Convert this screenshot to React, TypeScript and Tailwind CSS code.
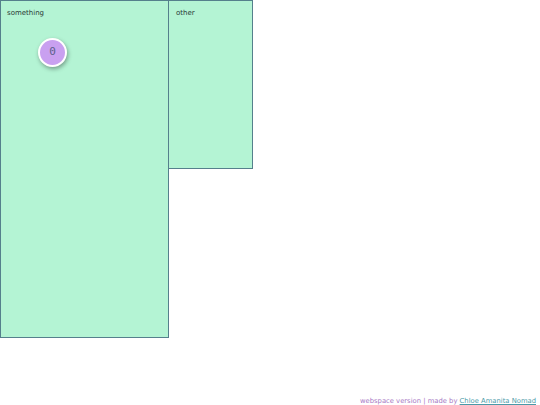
import React from "react";

export default function App() {
  return (
    <div className="relative w-[540px] h-[405px] bg-white overflow-hidden" style={{ fontFamily: '"DejaVu Sans", sans-serif' }}>
      <div className="flex items-start">
        <div className="relative w-[169px] h-[338px] bg-[#b4f4d4] border border-[#55808c] box-border">
          <div className="pl-[6px] pt-[7px] text-[7px] leading-[10px] text-[#2a3a36]">something</div>
          <div className="absolute left-[37px] top-[37px] w-[29px] h-[29px] rounded-full bg-[#c9a0f0] border-2 border-white shadow-[1px_2px_4px_rgba(0,0,0,0.35)] flex items-center justify-center text-[#5a5f8a] text-[11px]" style={{ fontFamily: '"DejaVu Sans Mono", monospace' }}>0</div>
        </div>
        <div className="w-[85px] h-[169px] -ml-[1px] bg-[#b4f4d4] border border-[#55808c] box-border">
          <div className="pl-[7px] pt-[7px] text-[7px] leading-[10px] text-[#2a3a36]">other</div>
        </div>
      </div>
      <div className="absolute right-[4px] bottom-[-1px] text-[6.8px] leading-[10px] text-[#a779c4]">
        webspace version | made by <span className="text-[#4a9aa8] underline">Chloe Amanita Nomad</span>
      </div>
    </div>
  );
}
